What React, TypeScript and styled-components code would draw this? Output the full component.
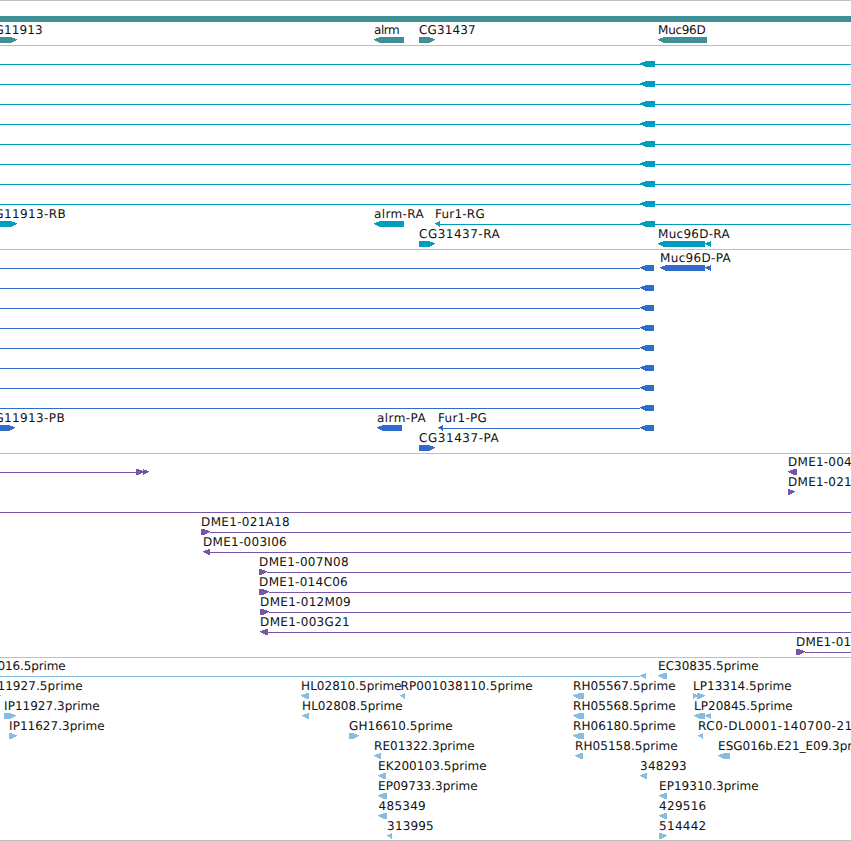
import styled, { createGlobalStyle } from "styled-components";

const GlobalStyle = createGlobalStyle`
    body {
        margin: 0;
        background: #fff;
        overflow: hidden;
    }
`;

const Browser = styled.main`
    display: flex;
    flex-direction: column;
    width: 851px;
    height: 841px;
    box-sizing: border-box;
    border-bottom: 1px solid #bfbfbf;
    overflow: hidden;
`;

const Track = styled.section<{ $color: string }>`
    display: flex;
    flex-direction: column;
    flex-shrink: 0;
    padding: 1px 0 2px;
    border-top: 1px solid #bfbfbf;
    color: ${({ $color }) => $color};
`;

const Lane = styled.svg<{ $height?: number }>`
    display: block;
    flex-shrink: 0;
    width: 851px;
    height: ${({ $height = 20 }) => $height}px;
    overflow: hidden;
    fill: currentColor;
    shape-rendering: crispEdges;
`;

const Label = styled.text`
    fill: #111;
    font-family: "DejaVu Sans", sans-serif;
    font-size: 12px;
    text-rendering: geometricPrecision;
`;

type Dir = "left" | "right" | "none";
type Glyph = [start: number, end: number, dir: Dir];
type Name = [text: string, start: number, end: number];

interface Row {
    height?: number;
    lines?: [number, number][];
    glyphs?: Glyph[];
    names?: Name[];
}

interface TrackData {
    id: string;
    color: string;
    rows: Row[];
}

const repeat = (count: number, row: Row): Row[] => Array.from({ length: count }, () => row);

const tracks: TrackData[] = [
    {
        id: "genes",
        color: "#3f8f96",
        rows: [
            { height: 21, glyphs: [[0, 851, "none"]] },
            {
                glyphs: [[-30, 17, "right"], [374, 404, "left"], [419, 435, "right"], [658, 707, "left"]],
                names: [["CG11913", -13.5, 42.5], ["alrm", 374.5, 399.5], ["CG31437", 419.5, 475.5], ["Muc96D", 658.5, 705.5]],
            },
        ],
    },
    {
        id: "transcripts",
        color: "#009dbf",
        rows: [
            ...repeat(8, { lines: [[0, 851]], glyphs: [[640, 655, "left"]] }),
            {
                lines: [[440, 851]],
                glyphs: [[-30, 17, "right"], [374, 404, "left"], [435, 440, "left"], [640, 655, "left"]],
                names: [["CG11913-RB", -14, 65.5], ["alrm-RA", 374.5, 423.5], ["Fur1-RG", 435.5, 484.5]],
            },
            {
                glyphs: [[419, 435, "right"], [658, 705, "left"], [705, 711, "left"]],
                names: [["CG31437-RA", 419.5, 499.5], ["Muc96D-RA", 658.5, 729.5]],
            },
        ],
    },
    {
        id: "proteins",
        color: "#316bcb",
        rows: [
            {
                lines: [[0, 640]],
                glyphs: [[640, 654, "left"], [660, 705, "left"], [705, 711, "left"]],
                names: [["Muc96D-PA", 660.5, 730.5]],
            },
            ...repeat(7, { lines: [[0, 640]], glyphs: [[640, 654, "left"]] }),
            {
                lines: [[443, 640]],
                glyphs: [[-30, 15, "right"], [377, 402, "left"], [438, 443, "left"], [640, 654, "left"]],
                names: [["CG11913-PB", -14, 64.5], ["alrm-PA", 377.5, 425.5], ["Fur1-PG", 438.5, 486.5]],
            },
            { glyphs: [[419, 435, "right"]], names: [["CG31437-PA", 419.5, 498.5]] },
        ],
    },
    {
        id: "bacs",
        color: "#7656a8",
        rows: [
            {
                lines: [[0, 136]],
                glyphs: [[136, 144, "right"], [143, 149, "right"], [788, 797, "left"]],
                names: [["DME1-004", 788.5, 851.5]],
            },
            { glyphs: [[788, 795, "right"]], names: [["DME1-021", 788.5, 851.5]] },
            { lines: [[0, 851]] },
            { lines: [[210, 851]], glyphs: [[201, 210, "right"]], names: [["DME1-021A18", 201.5, 289.5]] },
            { lines: [[210, 851]], glyphs: [[203, 210, "left"]], names: [["DME1-003I06", 203.5, 286.5]] },
            { lines: [[267, 851]], glyphs: [[259, 267, "right"]], names: [["DME1-007N08", 259.5, 348.5]] },
            { lines: [[269, 851]], glyphs: [[259, 269, "right"]], names: [["DME1-014C06", 259.5, 347.5]] },
            { lines: [[269, 851]], glyphs: [[260, 269, "right"]], names: [["DME1-012M09", 260.5, 350.5]] },
            { lines: [[268, 851]], glyphs: [[260, 268, "left"]], names: [["DME1-003G21", 260.5, 349.5]] },
            { lines: [[805, 851]], glyphs: [[796, 805, "right"]], names: [["DME1-01", 796.5, 851]] },
        ],
    },
    {
        id: "ests",
        color: "#88bddf",
        rows: [
            {
                lines: [[0, 640]],
                glyphs: [[640, 646, "left"], [658, 667, "left"]],
                names: [["016.5prime", -2, 65.5], ["EC30835.5prime", 658.5, 758.5]],
            },
            {
                glyphs: [[-8, 1, "right"], [301, 309, "left"], [400, 405, "left"], [573, 584, "left"], [693, 698, "right"], [697, 705, "right"]],
                names: [
                    ["IP11927.5prime", -13, 82.5],
                    ["HL02810.5prime", 301.5, 401.5],
                    ["RP001038110.5prime", 401, 532.5],
                    ["RH05567.5prime", 573.5, 675.5],
                    ["LP13314.5prime", 693.5, 791.5],
                ],
            },
            {
                glyphs: [[4, 16, "right"], [302, 309, "left"], [573, 584, "left"], [694, 705, "left"], [705, 711, "left"]],
                names: [
                    ["IP11927.3prime", 4.5, 99.5],
                    ["HL02808.5prime", 302.5, 402.5],
                    ["RH05568.5prime", 573.5, 675.5],
                    ["LP20845.5prime", 694.5, 792.5],
                ],
            },
            {
                glyphs: [[9, 17, "right"], [349, 359, "right"], [573, 584, "left"], [698, 703, "left"]],
                names: [
                    ["IP11627.3prime", 9.5, 104.5],
                    ["GH16610.5prime", 349.5, 452.5],
                    ["RH06180.5prime", 573.5, 675.5],
                    ["RC0-DL0001-140700-21", 698.5, 852],
                ],
            },
            {
                glyphs: [[374, 381, "left"], [575, 583, "left"], [718, 730, "left"]],
                names: [
                    ["RE01322.3prime", 374.5, 474.5],
                    ["RH05158.5prime", 575.5, 677.5],
                    ["ESG016b.E21_E09.3pr", 718.5, 852],
                ],
            },
            {
                glyphs: [[378, 386, "left"], [640, 647, "left"]],
                names: [["EK200103.5prime", 378.5, 486.5], ["348293", 640.5, 686.5]],
            },
            {
                glyphs: [[378, 387, "left"], [659, 667, "left"]],
                names: [["EP09733.3prime", 378.5, 477.5], ["EP19310.3prime", 659.5, 758.5]],
            },
            {
                glyphs: [[378, 387, "left"], [659, 667, "left"]],
                names: [["485349", 379, 425.5], ["429516", 659.5, 706]],
            },
            {
                glyphs: [[387, 392, "left"], [659, 667, "right"]],
                names: [["313995", 387.5, 433.5], ["514442", 659.5, 706]],
            },
        ],
    },
];

// arrow head as pixel steps: distance from the tip for each of the six rows
const head = [5, 2, 0, 1, 3, 5];

const glyphPoints = ([start, end, dir]: Glyph) => {
    if (dir === "none") {
        return `${start},14 ${end},14 ${end},20 ${start},20`;
    }
    const tip = dir === "left" ? start : end;
    const back = dir === "left" ? end : start;
    const sign = dir === "left" ? 1 : -1;
    const limit = Math.max(end - start - 1, 4);
    const steps = head.flatMap((inset, y) => {
        const x = tip + sign * Math.min(inset, limit);
        return [`${x},${14 + y}`, `${x},${15 + y}`];
    });
    return [`${back},14`, ...steps, `${back},20`].join(" ");
};

const App = () => (
    <>
        <GlobalStyle />
        <Browser>
            {tracks.map((track) => (
                <Track key={track.id} $color={track.color}>
                    {track.rows.map((row, i) => (
                        <Lane key={i} $height={row.height}>
                            {row.lines?.map(([from, to]) => (
                                <rect key={from} x={from} y={17} width={to - from} height={1} />
                            ))}
                            {row.glyphs?.map((glyph) => (
                                <polygon key={glyph[0]} points={glyphPoints(glyph)} />
                            ))}
                            {row.names?.map(([text, start, end]) => (
                                <Label key={text} x={start - 0.4} y={11} textLength={end - start + 0.6}>
                                    {text}
                                </Label>
                            ))}
                        </Lane>
                    ))}
                </Track>
            ))}
        </Browser>
    </>
);

export default App;
